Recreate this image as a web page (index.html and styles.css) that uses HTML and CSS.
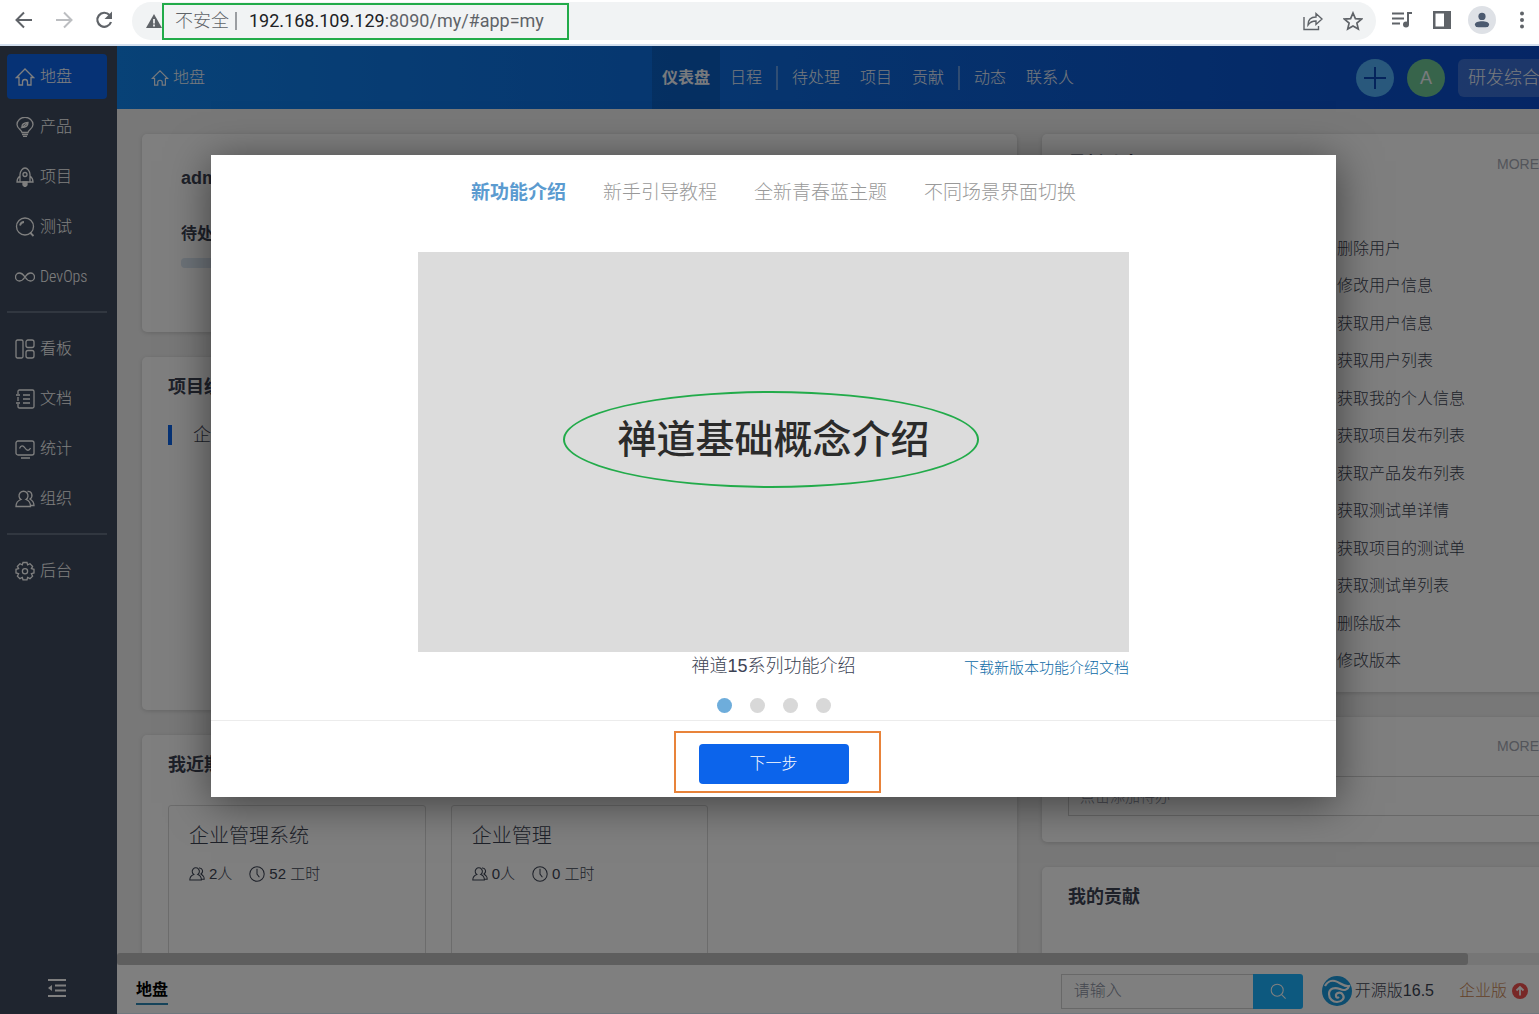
FILE: index.html
```html
<!DOCTYPE html>
<html lang="zh-CN">
<head>
<meta charset="utf-8">
<meta name="viewport" content="width=device-width, initial-scale=1">
<title>地盘 - 仪表盘</title>
<link rel="stylesheet" href="styles.css">
</head>
<body>
<svg class="sprite" aria-hidden="true">
  <symbol id="i-home" viewBox="0 0 20 20"><path d="M1.500 10.500 10 2l8.500 8.500H16V18h-3.500v-3a2.500 2.500 0 0 0-5 0v3H4v-7.500z"/></symbol>
  <symbol id="i-bulb" viewBox="0 0 20 20"><path d="M7 15.500c0-3-5-3.500-5-8a8 7.200 0 0 1 16 0c0 4.500-5 5-5 8zM7 17.500h6M8 19.500h4M7 10.500c-.5-3 2-5 6-5 0 3-2 5-6 5l5-4"/></symbol>
  <symbol id="i-rocket" viewBox="0 0 20 20"><path d="M5 15V7.500C5 4.500 7.500 1 10 1s5 3.500 5 6.500V15zM5 9c-2 1.500-3 3.500-3 6h3m10-6c2 1.500 3 3.500 3 6h-3"/><circle cx="10" cy="7.500" r="2"/><path d="M8 15v3l2 2 2-2v-3z" fill="currentColor"/></symbol>
  <symbol id="i-test" viewBox="0 0 20 20"><circle cx="10" cy="9.500" r="8.500"/><path d="M15 15.500 18.500 19M5 8.500C5.500 6.500 7 5 9 5" stroke-width="1.800"/></symbol>
  <symbol id="i-loop" viewBox="0 0 20 20"><path d="M10 10C8 7 6.500 6 4.500 6a4 4 0 0 0 0 8C6.500 14 8 13 10 10s3.500-4 5.500-4a4 4 0 0 1 0 8C13.500 14 12 13 10 10z"/></symbol>
  <symbol id="i-board" viewBox="0 0 20 20"><rect x="1" y="1" width="7" height="18" rx="1.500"/><rect x="11" y="1" width="8" height="7.500" rx="2"/><rect x="11" y="11.500" width="8" height="7.500" rx="2"/></symbol>
  <symbol id="i-doc" viewBox="0 0 20 20"><path d="M3 5V2.500Q3 1 4.500 1h13Q19 1 19 2.500v15q0 1.500-1.500 1.500h-13Q3 19 3 17.500V15M3 8v4M1 6h4M1 14h4M8 6h7M8 10h7M8 14h7"/></symbol>
  <symbol id="i-chart" viewBox="0 0 20 20"><rect x="1" y="2" width="18" height="14" rx="2"/><path d="M4.500 9.500C6 6 8 6 10 9s4 3 5.500 0M6 19h9"/></symbol>
  <symbol id="i-users" viewBox="0 0 20 20"><path d="M6 10.500a4.500 4.500 0 1 1 5 0c3 1 4.500 3.500 4.500 7H1c0-3.500 2-6 5-7zM12.500 2.500c4.500-.5 6 5 2.500 7.500 2.500 1.500 4 4 4 6.500h-3.500"/></symbol>
  <symbol id="i-gear" viewBox="0 0 20 20"><path d="M8 1.500h4l.6 2.400 2.400-1.200 2.600 2.600-1.200 2.300 2.600.7v3.600l-2.600.8 1.200 2.400-2.600 2.500-2.400-1.200-.6 2.400H8l-.7-2.400-2.400 1.200-2.500-2.500 1.200-2.400L1 11.900V8.300l2.600-.7-1.200-2.300 2.500-2.600 2.400 1.200z"/><circle cx="10" cy="10.200" r="2.600"/></symbol>
  <symbol id="i-fold" viewBox="0 0 20 20"><path d="M1 2h18M8 7.500h11M8 12.500h11M1 18h18" stroke-width="1.800"/><path d="M5 7v6L1 10z" fill="currentColor" stroke="none"/></symbol>
  <symbol id="i-clock" viewBox="0 0 20 20"><circle cx="10" cy="10" r="9"/><path d="M10 3.500V10l3 4"/></symbol>
  <symbol id="i-search" viewBox="0 0 20 20"><circle cx="9" cy="9" r="7.500"/><path d="m14.500 14.500 5 5"/></symbol>
  <symbol id="i-logo" viewBox="0 0 30 30"><circle cx="15" cy="15" r="15" fill="#1a9ade" stroke="none"/><path d="M3 10c2-4 6-6 10-5 5 1 8 6 14 5-1 4-5 5-9 3-5-2-11-1-11 5 0 5 4 8 8 8 5 0 8-4 6-7-2-4-8-2-7 1 0 2 2 2 3 1" stroke="#fff" stroke-width="2.200"/></symbol>
</svg>

<header class="browser">
  <button class="nav-btn" aria-label="后退"><svg class="b-icon" viewBox="0 0 20 20"><path d="M18 10H3M10 2.500 2.500 10l7.500 7.500" stroke-width="2"/></svg></button>
  <button class="nav-btn faded" aria-label="前进"><svg class="b-icon" viewBox="0 0 20 20"><path d="M2 10h15M10 2.500l7.500 7.500-7.500 7.500" stroke-width="2"/></svg></button>
  <button class="nav-btn" aria-label="刷新"><svg class="b-icon" viewBox="0 0 20 20"><path d="M15.500 5A7 7 0 1 0 17 12" stroke-width="2.200"/><path d="M18 1.500V9h-7.500z" fill="currentColor" stroke="none"/></svg></button>
  <div class="address">
    <svg class="warn" viewBox="0 0 16 16"><path d="M8 1 16 15H0z" fill="#5f6368"/><path d="M8 6v4.500M8 11.500v2" stroke="#fff" stroke-width="1.600"/></svg>
    <div class="url"><span class="insecure">不安全</span><span class="bar"></span><span class="host">192.168.109.129</span><span>:8090/my/#app=my</span></div>
    <div class="address-tools">
      <button class="nav-btn" aria-label="分享"><svg class="b-icon" viewBox="0 0 20 20"><path d="M1 6v12.500h14.500V15M5 14c0-6 4-8 8-8V2.500L19 8l-6 5.500V10c-4 0-6 1-8 4z" stroke-width="1.400"/></svg></button>
      <button class="nav-btn" aria-label="收藏"><svg class="b-icon" viewBox="0 0 20 20"><path d="m10 2 2.400 5.600 6.100.5-4.600 4 1.400 5.900L10 14.900 4.700 18l1.400-5.900-4.600-4 6.100-.5z" stroke-width="1.700"/></svg></button>
    </div>
  </div>
  <div class="browser-tools">
    <button class="nav-btn" aria-label="媒体"><svg class="b-icon" viewBox="0 0 20 20"><path d="M0 3.500h12M0 8.500h12M0 13.500h8M16 14.500V3h4" stroke-width="2"/><circle cx="14" cy="14.500" r="3" fill="currentColor" stroke="none"/></svg></button>
    <button class="nav-btn" aria-label="侧边栏"><svg class="b-icon" viewBox="0 0 20 20"><path d="M1 1h18v18H1zM3.500 3.500v13H12v-13z" fill="currentColor" fill-rule="evenodd" stroke="none"/></svg></button>
    <button class="nav-btn person" aria-label="用户"><svg class="b-icon" viewBox="0 0 20 20"><circle cx="10" cy="6" r="4" fill="currentColor" stroke="none"/><path d="M2 18v-3c0-5 16-5 16 0v3z" fill="currentColor" stroke="none"/></svg></button>
    <button class="nav-btn" aria-label="更多"><svg class="b-icon" viewBox="0 0 20 20"><g fill="currentColor" stroke="none"><circle cx="10" cy="3.500" r="2"/><circle cx="10" cy="10" r="2"/><circle cx="10" cy="16.500" r="2"/></g></svg></button>
  </div>
  <span class="mark mark-url"></span>
</header>

<div class="app">
  <nav class="sidebar">
    <a class="side-item active" href="#my"><svg class="icon"><use href="#i-home"/></svg>地盘</a>
    <a class="side-item" href="#product"><svg class="icon"><use href="#i-bulb"/></svg>产品</a>
    <a class="side-item" href="#project"><svg class="icon"><use href="#i-rocket"/></svg>项目</a>
    <a class="side-item" href="#qa"><svg class="icon"><use href="#i-test"/></svg>测试</a>
    <a class="side-item narrow" href="#devops"><svg class="icon"><use href="#i-loop"/></svg>DevOps</a>
    <hr class="side-rule">
    <a class="side-item" href="#kanban"><svg class="icon"><use href="#i-board"/></svg>看板</a>
    <a class="side-item" href="#doc"><svg class="icon"><use href="#i-doc"/></svg>文档</a>
    <a class="side-item" href="#report"><svg class="icon"><use href="#i-chart"/></svg>统计</a>
    <a class="side-item" href="#org"><svg class="icon"><use href="#i-users"/></svg>组织</a>
    <hr class="side-rule">
    <a class="side-item" href="#admin"><svg class="icon"><use href="#i-gear"/></svg>后台</a>
    <button class="fold" aria-label="收起"><svg class="icon"><use href="#i-fold"/></svg></button>
  </nav>

  <div class="main">
    <div class="scroller">
      <header class="topbar">
        <a class="crumb" href="#my"><svg class="icon small"><use href="#i-home"/></svg>地盘</a>
        <nav class="tabs">
          <a class="tab active" href="#dashboard">仪表盘</a>
          <a class="tab" href="#calendar">日程</a>
          <span class="tab-rule"></span>
          <a class="tab" href="#work">待处理</a>
          <a class="tab" href="#projects">项目</a>
          <a class="tab" href="#contribute">贡献</a>
          <span class="tab-rule"></span>
          <a class="tab" href="#dynamic">动态</a>
          <a class="tab" href="#contacts">联系人</a>
        </nav>
        <div class="top-actions">
          <button class="round plus" aria-label="新建"><svg class="icon plus-icon" viewBox="0 0 22 22"><path d="M11 0v22M0 11h22" stroke-width="2"/></svg></button>
          <button class="round avatar">A</button>
          <button class="mode">研发综合</button>
        </div>
      </header>

      <div class="board">
        <div class="column">
          <section class="card welcome">
            <h3>admin</h3>
            <h4>待处理</h4>
            <div class="progress"></div>
          </section>
          <section class="card stats">
            <h2>项目统计</h2>
            <a class="stat-item" href="#p1">企业管理系统</a>
          </section>
          <section class="card recent">
            <h2>我近期参与的项目</h2>
            <div class="projects">
              <article class="project">
                <h3>企业管理系统</h3>
                <p><svg class="icon tiny"><use href="#i-users"/></svg><span>2人</span><svg class="icon tiny"><use href="#i-clock"/></svg><span>52 工时</span></p>
              </article>
              <article class="project">
                <h3>企业管理</h3>
                <p><svg class="icon tiny"><use href="#i-users"/></svg><span>0人</span><svg class="icon tiny"><use href="#i-clock"/></svg><span>0 工时</span></p>
              </article>
            </div>
          </section>
        </div>
        <div class="column">
          <section class="card news">
            <div class="card-head"><h2>最新动态</h2><a href="#more">MORE</a></div>
            <ul>
              <li>删除用户</li>
              <li>修改用户信息</li>
              <li>获取用户信息</li>
              <li>获取用户列表</li>
              <li>获取我的个人信息</li>
              <li>获取项目发布列表</li>
              <li>获取产品发布列表</li>
              <li>获取测试单详情</li>
              <li>获取项目的测试单</li>
              <li>获取测试单列表</li>
              <li>删除版本</li>
              <li>修改版本</li>
            </ul>
          </section>
          <section class="card todo">
            <div class="card-head"><h2>我的待办</h2><a href="#more-todo">MORE</a></div>
            <input class="todo-input" type="text" placeholder="点击添加待办" aria-label="待办">
          </section>
          <section class="card contribution">
            <h2>我的贡献</h2>
          </section>
        </div>
      </div>
    </div>
    <div class="scrollbar"><div class="thumb"></div></div>
    <footer class="statusbar">
      <a class="current" href="#my">地盘</a>
      <form class="search">
        <input type="text" placeholder="请输入" aria-label="搜索">
        <button type="button" aria-label="搜索"><svg class="icon tiny"><use href="#i-search"/></svg></button>
      </form>
      <a class="version" href="#about"><svg class="logo"><use href="#i-logo"/></svg>开源版16.5</a>
      <a class="upgrade" href="#upgrade">企业版<svg class="up" viewBox="0 0 16 16"><circle cx="8" cy="8" r="8" fill="#f0504e"/><path d="M8 12.500V4.500M4.500 7.500 8 4l3.500 3.500" fill="none" stroke="#fff" stroke-width="1.800"/></svg></a>
    </footer>
  </div>

  <div class="backdrop">
    <div class="modal" role="dialog" aria-label="新功能介绍">
      <div class="modal-body">
        <nav class="steps">
          <a class="step active" href="#s1">新功能介绍</a>
          <a class="step" href="#s2">新手引导教程</a>
          <a class="step" href="#s3">全新青春蓝主题</a>
          <a class="step" href="#s4">不同场景界面切换</a>
        </nav>
        <div class="stage">
          <div class="video"><span class="video-title">禅道基础概念介绍</span><span class="mark mark-ellipse"></span></div>
          <div class="caption"><span class="caption-text">禅道15系列功能介绍</span><a href="#download">下载新版本功能介绍文档</a></div>
        </div>
        <div class="dots"><span class="dot on"></span><span class="dot"></span><span class="dot"></span><span class="dot"></span></div>
      </div>
      <div class="modal-foot">
        <button class="next">下一步</button>
        <span class="mark mark-next"></span>
      </div>
    </div>
  </div>
</div>
</body>
</html>
```
FILE: styles.css
```css
* { box-sizing: border-box; }

body {
  margin: 0;
  height: 100vh;
  display: flex;
  flex-direction: column;
  overflow: hidden;
  font: 300 16px/24px "Liberation Sans", "Noto Sans CJK SC", sans-serif;
  color: #3c4353;
  background: #fff;
}

h2, h3, h4, p, ul { margin: 0; padding: 0; }
ul { list-style: none; }
a { color: inherit; text-decoration: none; }
button { border: 0; padding: 0; background: none; font: inherit; color: inherit; }
input { font: inherit; border-radius: 0; outline: 0; }
svg { fill: none; stroke: currentColor; flex: none; }
.sprite { position: absolute; width: 0; height: 0; }
.icon { width: 20px; height: 20px; stroke-width: 1.3; }
.icon.small { width: 18px; height: 18px; }
.icon.tiny { width: 16px; height: 16px; }

/* browser toolbar */
.browser {
  position: relative;
  flex: none;
  display: flex;
  align-items: center;
  height: 46px;
  padding: 0 7px 4px 14px;
  gap: 20px;
  border-bottom: 2px solid #d3dfee;
  color: #5f6368;
}
.nav-btn { display: flex; width: 20px; }
.nav-btn.faded { color: #bcbec1; }
.b-icon { width: 20px; height: 20px; }
.address {
  flex: 1;
  display: flex;
  align-items: center;
  height: 38px;
  margin: 2px 0 0 -2px;
  padding: 0 13px 0 14px;
  border-radius: 19px;
  background: #f1f3f4;
}
.warn { width: 16px; height: 16px; stroke: none; }
.url {
  flex: 1;
  display: flex;
  align-items: center;
  padding-left: 13px;
  font: 400 18px/24px Roboto, "Noto Sans CJK SC", sans-serif;
}
.insecure { font-weight: 300; }
.bar { width: 2px; height: 18px; margin: 0 12px 0 6px; background: #9a9da1; }
.host { color: #202124; }
.address-tools { display: flex; gap: 20px; }
.browser-tools { display: flex; align-items: center; gap: 20px; margin-left: -4px; }
.person .b-icon { width: 28px; height: 28px; padding: 5px; margin: 0 -4px; border-radius: 50%; background: #dee1e6; color: #4c5a70; }

/* annotations */
.mark { position: absolute; pointer-events: none; border: 2px solid #22ab4a; }
.mark-url { left: 162px; top: 3px; width: 407px; height: 37px; }
.mark-ellipse { left: 145px; top: 139px; width: 416px; height: 97px; border-radius: 50%; }
.mark-next { left: 463px; top: 10px; width: 207px; height: 62px; border-color: #e8833a; }

/* application frame */
.app { position: relative; flex: 1; min-height: 0; display: flex; }
.sidebar {
  flex: none;
  display: flex;
  flex-direction: column;
  gap: 5px;
  width: 117px;
  padding: 8px 10px 16px 7px;
  background: #3e4b5e;
  color: #fff;
}
.side-item { display: flex; align-items: center; gap: 5px; height: 45px; padding-left: 8px; border-radius: 4px; }
.side-item.active { background: #0c64eb; }
.side-item.narrow { font-family: "Roboto Condensed", "Open Sans Condensed", "Noto Sans Condensed", Roboto, sans-serif; }
.side-rule { width: 100%; height: 2px; margin: 7px 0 8px; border: 0; background: #636f80; }
.fold { margin: auto auto 0; display: flex; }

.main { flex: 1; min-width: 0; display: flex; flex-direction: column; }
.scroller { flex: 1; min-height: 0; overflow: hidden; background: #f0f0f0; }
.topbar {
  display: grid;
  grid-template-columns: 1fr auto 1fr;
  align-items: center;
  min-width: 1502px;
  height: 63px;
  padding: 0 34px;
  background: linear-gradient(90deg, #1084ee, #0c68dc 45%, #0a48c8);
  color: #f0f4fa;
}
.crumb { display: flex; align-items: center; gap: 4px; }
.tabs { display: flex; align-items: center; }
.tab { padding: 0 10px; line-height: 63px; }
.tab.active { background: rgba(0, 0, 0, .12); font-weight: 700; }
.tab-rule { width: 2px; height: 24px; margin: 0 4px; background: rgba(255, 255, 255, .35); }
.top-actions { display: flex; justify-content: flex-end; gap: 13px; }
.round { display: flex; align-items: center; justify-content: center; width: 38px; height: 38px; border-radius: 50%; }
.plus { background: #52b0f8; color: #0a48b8; }
.plus-icon { width: 22px; height: 22px; }
.avatar { background: #6ec896; font-size: 18px; font-weight: 400; }
.mode { height: 38px; width: 127px; padding-left: 10px; text-align: left; border-radius: 6px; background: rgba(255, 255, 255, .2); font-size: 18px; }

/* dashboard cards */
.board {
  display: grid;
  grid-template-columns: 875fr 552fr;
  gap: 25px;
  min-width: 1502px;
  padding: 25px;
}
.column { display: flex; flex-direction: column; gap: 25px; min-width: 0; }
.card { padding: 18px 26px 16px; border-radius: 5px; background: #fff; box-shadow: 0 1px 4px rgba(0, 0, 0, .15); }
.card h2 { font-size: 18px; line-height: 24px; font-weight: 700; }
.card-head { display: flex; justify-content: space-between; align-items: center; padding-right: 29px; }
.card-head a { color: #a6aab5; font-size: 14px; }
.welcome { height: 198px; padding: 32px 39px; }
.welcome h3 { font-size: 18px; line-height: 24px; }
.welcome h4 { margin-top: 32px; font-size: 16px; line-height: 24px; }
.progress { height: 10px; margin-top: 12px; border-radius: 4px; background: #dbe6f2; }
.stats { height: 353px; }
.stat-item { display: block; margin-top: 26px; padding-left: 21px; border-left: 4px solid #0c64eb; font-size: 18px; line-height: 20px; }
.recent { height: 353px; }
.projects { display: grid; grid-template-columns: repeat(3, 1fr); gap: 25px; margin-top: 28px; }
.project { height: 180px; padding: 18px 20px; border: 1px solid #d8d8d8; border-radius: 3px; }
.project h3 { font-size: 20px; line-height: 24px; font-weight: 300; }
.project p { display: flex; align-items: center; gap: 4px; margin-top: 14px; font-size: 15px; }
.project span { margin-right: 13px; }
.news { height: 558px; }
.news ul { display: grid; grid-auto-rows: 1fr; align-items: center; height: 450px; margin-top: 54px; padding-left: 269px; }
.todo { height: 125px; padding-top: 17px; }
.todo-input { display: block; width: 100%; height: 40px; margin-top: 18px; padding: 0 11px; border: 1px solid #d0d0d0; font-size: 15px; }
input::placeholder { color: #8a8fa0; opacity: 1; }
.contribution { height: 220px; }

.scrollbar { flex: none; height: 12px; background: #ececec; }
.thumb { width: 95%; height: 12px; border-radius: 3px; background: #bcbcbc; }

/* status bar */
.statusbar { flex: none; display: flex; align-items: center; height: 49px; padding: 4px 11px 0 19px; background: #fff; border-bottom: 1px solid #dfeffb; }
.current { color: #000; font-weight: 700; border-bottom: 2px solid #2c86b5; line-height: 26px; }
.search { display: flex; margin: 0 19px 0 auto; height: 35px; }
.search input { width: 192px; padding: 0 12px; border: 1px solid #d0d0d0; border-right: 0; }
.search button { display: flex; align-items: center; justify-content: center; width: 50px; background: #1ab2ff; color: #fff; border-radius: 0 3px 3px 0; }
.version { display: flex; align-items: center; gap: 3px; margin-right: 25px; }
.logo { width: 30px; height: 30px; }
.upgrade { display: flex; align-items: center; gap: 5px; color: #c88450; }
.up { width: 16px; height: 16px; stroke: none; }

/* introduction dialog */
.backdrop {
  position: absolute;
  inset: 0;
  display: flex;
  justify-content: center;
  align-items: flex-start;
  padding: 109px 0 0 8px;
  background: rgba(0, 0, 0, .5);
}
.modal { width: 1125px; background: #fff; box-shadow: 0 6px 40px rgba(0, 0, 0, .5); }
.modal-body { display: flex; flex-direction: column; align-items: center; padding: 25px 0 7px; border-bottom: 1px solid #ececec; }
.steps { display: flex; gap: 37px; font-size: 19px; line-height: 26px; color: #999; }
.step.active { color: #5b9bd0; font-weight: 700; }
.stage { width: 711px; margin-top: 46px; }
.video { position: relative; display: flex; align-items: center; justify-content: center; height: 400px; padding-bottom: 24px; background: #dcdcdc; }
.video-title { font-size: 39px; line-height: 48px; font-weight: 500; color: #2b2b2b; }
.caption { display: grid; grid-template-columns: 1fr auto 1fr; height: 28px; line-height: 28px; }
.caption-text { grid-column: 2; font-size: 18px; }
.caption a { justify-self: end; font-size: 15px; line-height: 32px; color: #0c6aa6; }
.dots { display: flex; gap: 18px; margin-top: 18px; }
.dot { width: 15px; height: 15px; border-radius: 50%; background: #d8d8d8; }
.dot.on { background: #6eaddb; }
.modal-foot { position: relative; display: flex; justify-content: center; height: 76px; padding-top: 23px; }
.next { width: 150px; height: 40px; border-radius: 4px; background: #0c64eb; color: #fff; }
```
